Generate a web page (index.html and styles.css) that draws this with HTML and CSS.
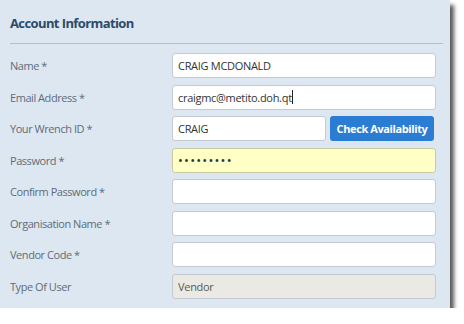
FILE: index.html
```html
<!DOCTYPE html>
<html lang="en">
  <head>
    <meta charset="UTF-8" />
    <title>Account Information</title>
    <link rel="stylesheet" href="styles.css">
  </head>
  <body>
    <div class="panel">
      <div class="panel-title">Account Information</div>
      <form class="form-grid">
        <label>Name *</label>
        <input type="text" value="CRAIG MCDONALD" />

        <label>Email Address *</label>
        <div class="field-caret">
          <span>craigmc@metito.doh.qt</span><i class="caret"></i>
        </div>

        <label>Your Wrench ID *</label>
        <div class="field-row">
          <input type="text" value="CRAIG" />
          <button type="button" class="btn-check">Check Availability</button>
        </div>

        <label>Password *</label>
        <input type="password" class="pw" value="123456789" />

        <label>Confirm Password *</label>
        <input type="password" />

        <label>Organisation Name *</label>
        <input type="text" />

        <label>Vendor Code *</label>
        <input type="text" />

        <label>Type Of User</label>
        <input type="text" class="disabled" value="Vendor" disabled />
      </form>
    </div>
  </body>
</html>
```

FILE: styles.css
```css
body {
  margin: 0;
  background-color: white;
  font-family: "Open Sans", sans-serif;
}

.panel {
  width: 450px;
  height: 308px;
  box-sizing: border-box;
  padding: 0 14px 0 10px;
  background-color: #dde7f1;
  box-shadow: 4px 5px 4px rgba(0, 0, 0, 0.65);
}

.panel-title {
  height: 43px;
  line-height: 46px;
  margin-right: -7px;
  border-bottom: 1px solid #a9c3dc;
  color: #2c4a6a;
  font-size: 13px;
  font-weight: 700;
  letter-spacing: -0.6px;
}

.form-grid {
  display: grid;
  grid-template-columns: 162px 1fr;
  grid-auto-rows: 25px;
  row-gap: 6.5px;
  padding-top: 9px;
  align-items: center;
}

.form-grid label {
  color: #5e6c7a;
  font-size: 11px;
  letter-spacing: -0.45px;
}

.form-grid input,
.field-caret {
  box-sizing: border-box;
  width: 100%;
  height: 25px;
  margin: 0;
  padding: 0 5px;
  border: 1px solid #c3cad2;
  border-radius: 3px;
  background-color: white;
  color: #333;
  font-family: "Open Sans", sans-serif;
  font-size: 11px;
  letter-spacing: -0.3px;
  outline: none;
}

.field-caret {
  display: flex;
  align-items: center;
}

.caret {
  width: 1px;
  height: 14px;
  background-color: #222;
}

.field-row {
  display: flex;
  gap: 4px;
  padding-right: 2px;
}

.field-row input {
  flex: 1;
}

.btn-check {
  width: 104px;
  height: 25px;
  padding: 0;
  border: none;
  border-radius: 3px;
  background-color: #2b7cd3;
  color: white;
  font-family: "Open Sans", sans-serif;
  font-size: 11px;
  font-weight: 700;
  letter-spacing: -0.4px;
}

.form-grid input.pw {
  background-color: #ffffc6;
  border-color: #c9c9a4;
  font-size: 13px;
  letter-spacing: 1.2px;
}

.form-grid input.disabled {
  background-color: #ebe9e3;
  color: #5a5a5a;
}
```
